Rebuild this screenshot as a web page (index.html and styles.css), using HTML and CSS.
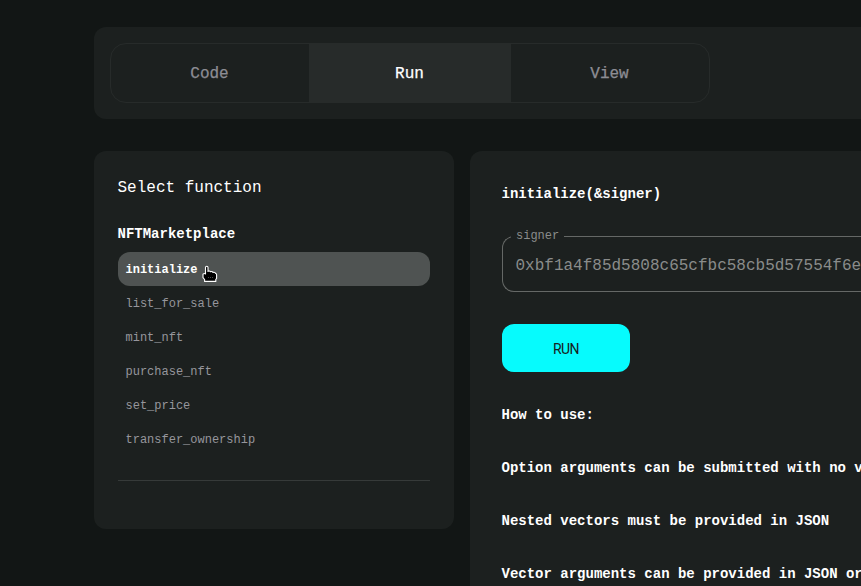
FILE: index.html
```html
<!DOCTYPE html>
<html lang="en">
<head>
<meta charset="utf-8">
<title>NFTMarketplace</title>
<link rel="stylesheet" href="styles.css">
</head>
<body>
<main class="page">
  <header class="card toolbar">
    <nav class="tabs">
      <a class="tab">Code</a>
      <a class="tab tab-active">Run</a>
      <a class="tab">View</a>
    </nav>
  </header>
  <div class="columns">
    <aside class="card sidebar">
      <h2 class="sidebar-title">Select function</h2>
      <h3 class="module-name">NFTMarketplace</h3>
      <ul class="functions">
        <li class="fn fn-active">initialize
          <svg class="cursor" width="16" height="18" viewBox="0 0 16 18"><path d="M3.5 9V2.6Q3.5 1.2 4.8 1.2Q6 1.2 6 2.6V6.4Q7.7 5.4 8.5 6.7Q10.2 6 11 7.4Q13 6.8 13.7 8.5Q14.6 8.6 14.6 10V13.5L13.8 14.4V16.4H2.6V14.5L1 12.6V9.2Q2.2 8 3.5 9Z" fill="#000" stroke="#fff" stroke-width="1.1" stroke-linejoin="round"/><path d="M6.5 12v1M8.5 12v1M10.5 12v1" stroke="#666" stroke-width=".7"/></svg>
        </li>
        <li class="fn">list_for_sale</li>
        <li class="fn">mint_nft</li>
        <li class="fn">purchase_nft</li>
        <li class="fn">set_price</li>
        <li class="fn">transfer_ownership</li>
      </ul>
      <hr class="divider">
    </aside>
    <section class="card panel">
      <h3 class="signature">initialize(&amp;signer)</h3>
      <fieldset class="field">
        <legend class="field-label">signer</legend>
        <div class="field-value">0xbf1a4f85d5808c65cfbc58cb5d57554f6e</div>
      </fieldset>
      <button class="run">RUN</button>
      <p class="help">How to use:</p>
      <p class="help">Option arguments can be submitted with no v</p>
      <p class="help">Nested vectors must be provided in JSON</p>
      <p class="help">Vector arguments can be provided in JSON or</p>
    </section>
  </div>
</main>
</body>
</html>
```
FILE: styles.css
```css
* {
  box-sizing: border-box;
}

body {
  margin: 0;
  height: 586px;
  overflow: hidden;
  background: #121615;
  color: #fff;
  font-family: "Liberation Mono", monospace;
}

h2, h3, p, ul {
  margin: 0;
  padding: 0;
}

.page {
  height: 586px;
  padding: 27px 0 0 94px;
  overflow: hidden;
}

.card {
  background: #1c201f;
  border-radius: 12px;
}

.toolbar {
  height: 92px;
  padding: 16px;
  border-radius: 12px 0 0 12px;
}

.tabs {
  display: flex;
  width: 600px;
  height: 60px;
  border: 1px solid #272b2a;
  border-radius: 16px;
}

.tab {
  flex: 0 0 198px;
  display: flex;
  align-items: center;
  justify-content: center;
  padding: 2px 1px 0 0;
  color: #8d8d94;
  font-size: 16px;
  -webkit-text-stroke: 0.25px;
}

.tab-active {
  flex-basis: 202px;
  background: #272b2a;
  color: #fff;
}

.columns {
  display: flex;
  align-items: flex-start;
  gap: 16px;
  margin-top: 32px;
}

.sidebar {
  flex: none;
  width: 360px;
  height: 378px;
  padding: 25px 24px 24px;
}

.sidebar-title {
  margin-left: -0.5px;
  font-size: 16px;
  font-weight: 400;
  line-height: 24px;
}

.module-name {
  margin: 24px 0 0 -0.5px;
  font-size: 14px;
  line-height: 20px;
}

.functions {
  margin-top: 8px;
  list-style: none;
}

.fn {
  position: relative;
  height: 34px;
  padding: 1px 0 0 7.5px;
  border-radius: 12px;
  color: #96969c;
  font-size: 12px;
  line-height: 34px;
}

.fn-active {
  background: #4f5352;
  color: #fff;
  font-weight: 700;
}

.cursor {
  position: absolute;
  left: 84px;
  top: 13px;
}

.divider {
  margin: 24px 0 0;
  border: 0;
  border-top: 1px solid #363a39;
}

.panel {
  flex: 1;
  min-width: 0;
  height: 435px;
  padding: 33px 0 0 32px;
  border-radius: 12px 0 0 0;
}

.signature {
  margin-left: -0.5px;
  font-size: 14px;
  line-height: 21px;
}

.field {
  min-width: 0;
  height: 63px;
  margin: 24px 0 0;
  padding: 0 0 0 12.5px;
  border: 1px solid #656866;
  border-right: 0;
  border-radius: 12px 0 0 12px;
  color: #8a8c8b;
}

.field-label {
  margin-left: -4.5px;
  padding: 0 5px;
  font-size: 12px;
  line-height: 14px;
}

.field-value {
  font-size: 16px;
  line-height: 46px;
}

.run {
  display: block;
  width: 128px;
  height: 48px;
  margin: 32px 0;
  padding: 1px 0 0;
  border: 0;
  border-radius: 12px;
  background: #06fbfd;
  color: #172220;
  font: 400 14px/20px Roboto, sans-serif;
  letter-spacing: -0.5px;
}

.help {
  height: 21px;
  margin: 0 0 32px -0.5px;
  font-size: 14px;
  font-weight: 700;
  line-height: 21px;
  white-space: nowrap;
}

.run + .help {
  padding-top: 1px;
  height: 22px;
}
```
